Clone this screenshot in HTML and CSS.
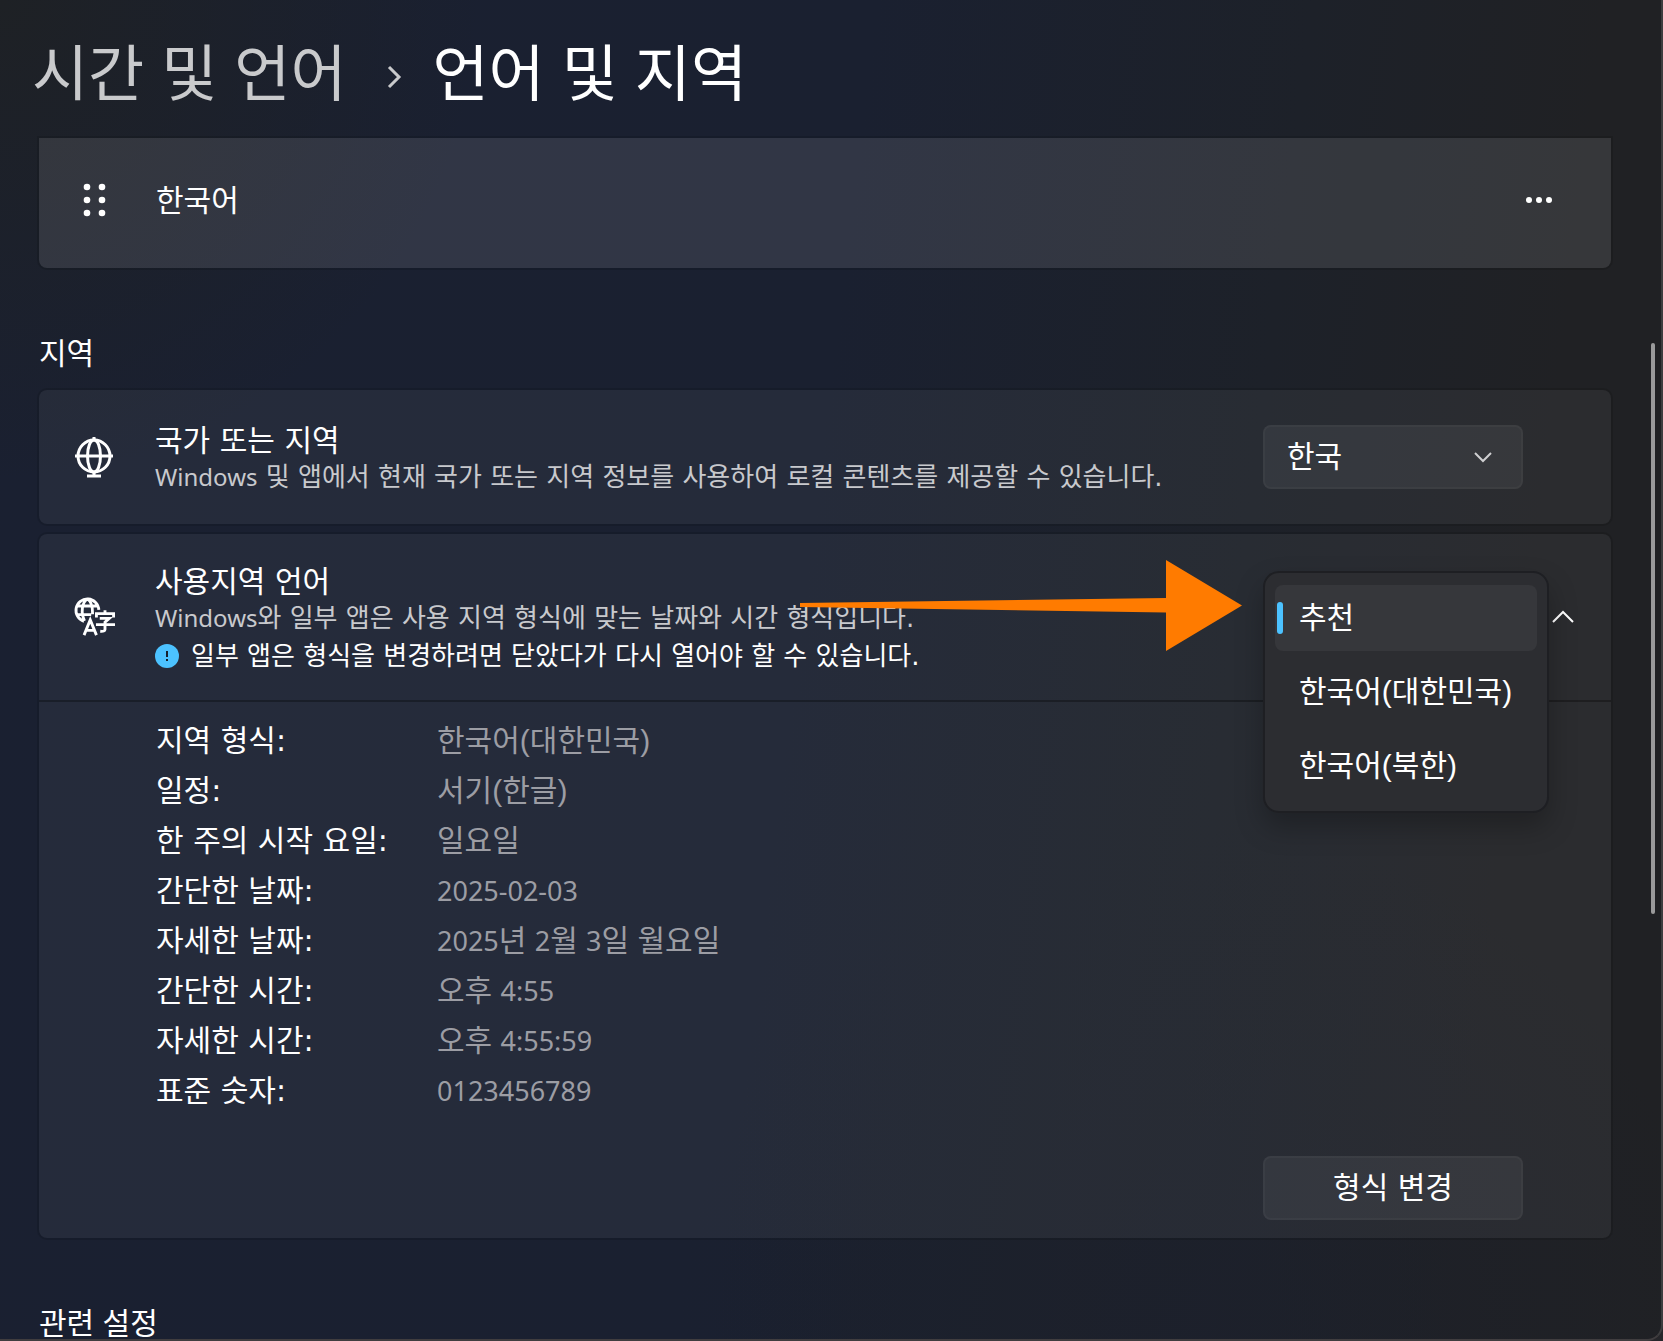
FILE: index.html
```html
<!DOCTYPE html>
<html lang="ko">
<head>
  <meta charset="UTF-8">
  <meta name="viewport" content="width=device-width, initial-scale=1.0">
  <title>언어 및 지역</title>
  <link rel="stylesheet" href="styles.css">
</head>
<body>
  <div class="window">
    <header class="breadcrumb">
      <a href="#">시간 및 언어</a>
      <svg class="crumb-arrow" viewBox="0 0 14 24" aria-hidden="true"><path d="M2 2l10 10L2 22"/></svg>
      <h1>언어 및 지역</h1>
    </header>

    <main>
      <section class="card language">
        <svg class="grip" viewBox="0 0 24 34" aria-hidden="true">
          <circle cx="4" cy="4" r="3.3"/><circle cx="19" cy="4" r="3.3"/>
          <circle cx="4" cy="17" r="3.3"/><circle cx="19" cy="17" r="3.3"/>
          <circle cx="4" cy="30" r="3.3"/><circle cx="19" cy="30" r="3.3"/>
        </svg>
        <span class="name">한국어</span>
        <button class="more" aria-label="더 보기">
          <svg viewBox="0 0 26 6"><circle cx="3" cy="3" r="3"/><circle cx="13" cy="3" r="3"/><circle cx="23" cy="3" r="3"/></svg>
        </button>
      </section>

      <h2>지역</h2>

      <section class="card country">
        <svg class="icon" viewBox="0 0 40 40" aria-hidden="true">
          <circle cx="19" cy="19" r="16"/>
          <ellipse cx="19" cy="19" rx="6.5" ry="16"/>
          <path d="M0 19h38M19 0v3M19 35v4M12 39h14"/>
        </svg>
        <div class="text">
          <label class="name" for="country">국가 또는 지역</label>
          <p class="desc"><span class="latin">Windows</span> 및 앱에서 현재 국가 또는 지역 정보를 사용하여 로컬 콘텐츠를 제공할 수 있습니다.</p>
        </div>
        <div class="select-box">
          <select id="country">
            <option>한국</option>
          </select>
          <svg viewBox="0 0 18 10" aria-hidden="true"><path d="M1 1l8 8 8-8"/></svg>
        </div>
      </section>

      <section class="card format">
        <div class="format-head">
          <svg class="icon" viewBox="0 0 42 40" aria-hidden="true">
            <path d="M9.500 24.500A12 12 0 1 1 25 12.500M10 24C6 16 7 5 13 1M13 1c4 2 5.500 6 5.500 16M2 8.500h22M2 17.500h15"/>
            <path d="M9.500 39L16 23l6.500 16M12 34h8"/>
            <path d="M31.500 13v3M22.500 20.500v-4h18v4M26 21.500h10l-4.500 4v7.500q0 2.500-5 2M22 28h20"/>
          </svg>
          <div class="text">
            <h3 class="name">사용지역 언어</h3>
            <p class="desc"><span class="latin">Windows</span>와 일부 앱은 사용 지역 형식에 맞는 날짜와 시간 형식입니다.</p>
            <p class="notice">
              <svg viewBox="0 0 24 24" aria-hidden="true"><circle cx="12" cy="12" r="12"/><path d="M12 7v6M12 15v2"/></svg>
              일부 앱은 형식을 변경하려면 닫았다가 다시 열어야 할 수 있습니다.
            </p>
          </div>
          <button class="collapse" aria-label="접기">
            <svg viewBox="0 0 22 12"><path d="M1 11L11 1l10 10"/></svg>
          </button>
        </div>

        <dl class="details">
          <dt>지역 형식:</dt><dd>한국어(대한민국)</dd>
          <dt>일정:</dt><dd>서기(한글)</dd>
          <dt>한 주의 시작 요일:</dt><dd>일요일</dd>
          <dt>간단한 날짜:</dt><dd><span class="latin">2025-02-03</span></dd>
          <dt>자세한 날짜:</dt><dd><span class="latin">2025</span>년 <span class="latin">2</span>월 <span class="latin">3</span>일 월요일</dd>
          <dt>간단한 시간:</dt><dd>오후 <span class="latin">4:55</span></dd>
          <dt>자세한 시간:</dt><dd>오후 <span class="latin">4:55:59</span></dd>
          <dt>표준 숫자:</dt><dd><span class="latin">0123456789</span></dd>
        </dl>

        <div class="actions">
          <button class="change">형식 변경</button>
        </div>

        <svg class="pointer" viewBox="0 0 442 92" aria-hidden="true">
          <path d="M0 43L366 38V0l76 45.500L366 91V52.500L0 47z"/>
        </svg>

        <div class="menu" role="listbox" aria-label="사용지역 언어">
          <button role="option" aria-selected="true">추천</button>
          <button role="option" aria-selected="false">한국어(대한민국)</button>
          <button role="option" aria-selected="false">한국어(북한)</button>
        </div>
      </section>

      <h2>관련 설정</h2>
    </main>

    <div class="scroll-thumb"></div>
  </div>
</body>
</html>
```
FILE: styles.css
```css
* {
  box-sizing: border-box;
}
body {
  margin: 0;
  background: #26262a;
  color: #fff;
  font-family: "Liberation Sans", "Noto Sans CJK KR", sans-serif;
  font-size: 30px;
  line-height: 40px;
}
h1, h2, h3, p, dl, dd {
  margin: 0;
  font-weight: 400;
}
button, select {
  font: inherit;
  color: inherit;
  border: none;
  background: none;
  cursor: pointer;
}
svg {
  display: block;
  flex: none;
  overflow: visible;
  fill: none;
  stroke: #fff;
  stroke-width: 2;
}
.window {
  position: relative;
  height: 100vh;
  overflow: hidden;
  padding: 0 50px 0 39px;
  border-right: 2px solid #3d3d3f;
  border-bottom: 2px solid #403d3f;
  border-bottom-right-radius: 16px;
  background:
    radial-gradient(circle at 0 0, #1e2125 0, rgba(30, 33, 37, 0) 480px),
    radial-gradient(circle at 72% 100%, rgba(28, 32, 44, 0.8) 0, rgba(28, 32, 44, 0) 520px),
    linear-gradient(97deg, #1a2031 0, #1a2030 48%, #1d2129 72%, #202124 88%);
}
.breadcrumb {
  display: flex;
  align-items: center;
  height: 138px;
  margin-left: -7px;
  padding-top: 12px;
  font-size: 61px;
  line-height: 80px;
}
.breadcrumb a {
  color: #c9cacc;
  text-decoration: none;
}
.breadcrumb h1 {
  font-size: 61px;
}
.crumb-arrow {
  width: 14px;
  height: 24px;
  margin: 4px 32px 0 40px;
  stroke: #c9cacc;
  stroke-width: 3;
}
h2 {
  font-size: 30px;
}
.latin {
  font-family: "Noto Sans", sans-serif;
  font-size: 27px;
}

/* cards */
.card {
  position: relative;
  border-radius: 8px;
  background: rgba(255, 255, 255, 0.05);
  box-shadow: 0 0 0 2px rgba(0, 0, 0, 0.12);
}
.language {
  display: flex;
  align-items: center;
  height: 130px;
  padding: 0 59px 6px 44px;
  border-radius: 0 0 8px 8px;
  background: rgba(255, 255, 255, 0.1);
}
.language svg {
  fill: #fff;
  stroke: none;
}
.grip {
  width: 24px;
  height: 34px;
}
.language .name {
  flex: 1;
  margin-left: 49px;
}
.more {
  padding: 0;
}
.more svg {
  width: 26px;
  height: 6px;
}
.card + h2 {
  padding: 66px 0 16px;
}
.country {
  display: flex;
  align-items: center;
  height: 134px;
  margin-bottom: 10px;
  padding: 0 88px 0 36px;
}
.icon {
  width: 40px;
  height: 40px;
  stroke-width: 3;
}
.text {
  flex: 1;
  margin-left: 40px;
}
.name, .desc, .notice, .details dt, .change {
  font-family: "DejaVu Sans", "Noto Sans CJK KR", sans-serif;
}
.name {
  display: block;
  padding-top: 2px;
  font-size: 30px;
  line-height: 38px;
}
.desc, .notice {
  font-size: 26px;
  line-height: 34px;
}
.desc {
  color: #c8c9cd;
}
.desc .latin {
  font-size: 24px;
}
.select-box {
  position: relative;
}
select, .change {
  width: 260px;
  height: 64px;
  border: 2px solid rgba(255, 255, 255, 0.03);
  border-radius: 8px;
  background: rgba(255, 255, 255, 0.06);
}
select {
  appearance: none;
  padding: 0 22px;
}
select option {
  background: #2c2d31;
}
.select-box svg {
  position: absolute;
  top: 27px;
  right: 31px;
  width: 18px;
  height: 10px;
  stroke: #d0d0d2;
  pointer-events: none;
}

/* regional format */
.format-head {
  display: flex;
  align-items: center;
  height: 168px;
  padding: 0 37px 0 36px;
  border-bottom: 2px solid rgba(0, 0, 0, 0.3);
}
.notice {
  display: flex;
  align-items: center;
  gap: 12px;
  margin-top: 4px;
}
.notice svg {
  width: 24px;
  height: 24px;
  fill: #4cc2ff;
  stroke: none;
}
.notice path {
  stroke: #16202c;
  stroke-width: 2;
}
.collapse {
  padding: 0;
}
.collapse svg {
  width: 22px;
  height: 12px;
}
.details {
  display: grid;
  grid-template-columns: 281px 1fr;
  grid-auto-rows: 50px;
  padding: 14px 0 0 117px;
  line-height: 50px;
}
.details dd {
  color: #9c9da4;
}
.actions {
  display: flex;
  justify-content: flex-end;
  padding: 40px 88px 18px;
}
.pointer {
  position: absolute;
  top: 26px;
  right: 369px;
  width: 442px;
  height: 92px;
  fill: #ff7b00;
  stroke: none;
}
.menu {
  position: absolute;
  top: 37px;
  right: 62px;
  display: flex;
  flex-direction: column;
  gap: 8px;
  width: 286px;
  padding: 12px 10px;
  border: 2px solid #1e1f23;
  border-radius: 16px;
  background: #2c2d31;
  box-shadow: 0 14px 28px rgba(0, 0, 0, 0.25);
}
.menu button {
  position: relative;
  height: 66px;
  padding: 0 24px;
  border-radius: 8px;
  text-align: left;
  white-space: nowrap;
}
.menu button[aria-selected="true"] {
  background: #36373b;
}
.menu button[aria-selected="true"]::before {
  content: "";
  position: absolute;
  top: 17px;
  left: 2px;
  width: 6px;
  height: 32px;
  border-radius: 3px;
  background: #4cc2ff;
}
.scroll-thumb {
  position: absolute;
  top: 343px;
  right: 6px;
  width: 4px;
  height: 571px;
  border-radius: 2px;
  background: #9a9a9b;
}
```
